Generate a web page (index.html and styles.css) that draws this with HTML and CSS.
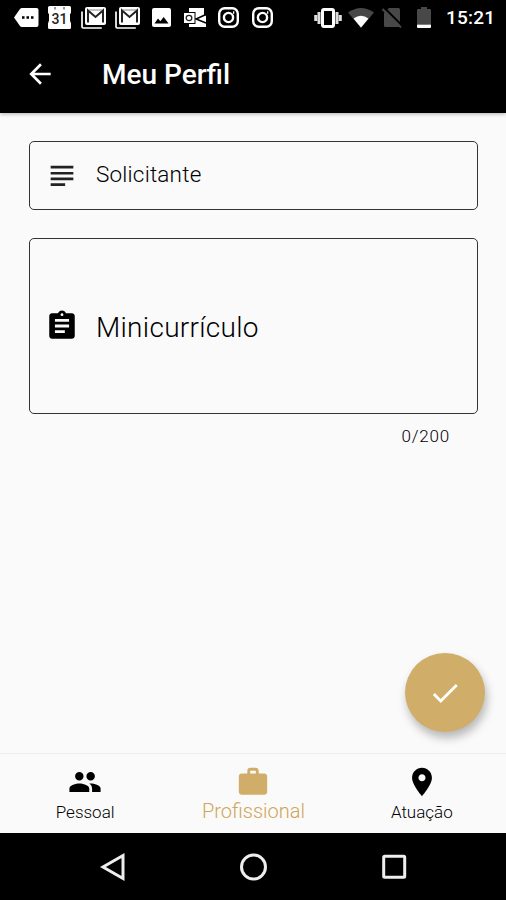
FILE: index.html
```
<!DOCTYPE html>
<html lang="pt-BR">
    <head>
        <title>Meu Perfil</title>
        <meta charset="UTF-8">
        <meta name="viewport" content="width=device-width, initial-scale=1">
        <link rel="stylesheet" href="styles.css">
    </head>
    <body>
        <div class="status-bar">
            <div class="notifications">
                <svg width="25" height="19" viewBox="0 0 25 19">
                    <path fill="#fff" d="M8 0h14.500q2 0 2 2v15q0 2-2 2H8q-1.200 0-2-1L0 9.500 6 1q.8-1 2-1z"/>
                    <path d="M8 8.300h2.500v2.400H8zM12.500 8.300H15v2.400h-2.500zM17 8.300h2.500v2.400H17z"/>
                </svg>
                <svg class="calendar" width="23" height="23" viewBox="0 0 23 23">
                    <path fill="#fff" d="M1.500 0h20Q23 0 23 1.500v5l-1 2v6l1 3v4q0 1.500-1.500 1.500h-20Q0 23 0 21.500v-4l1-3v-6l-1-2v-5Q0 0 1.500 0z"/>
                    <path fill="#999" d="M6 1h2v2.500H6zM15 1h2v2.500h-2z"/>
                    <text x="11.500" y="18" text-anchor="middle">31</text>
                </svg>
                <svg width="25" height="22" viewBox="0 0 25 22">
                    <path fill="none" stroke="#fff" stroke-width="1.700" d="M1 4.500v15.200q0 1.300 1.300 1.300h18.500"/>
                    <rect x="4" y="0" width="21" height="18" rx="2" fill="#fff"/>
                    <path fill="none" stroke="#222" stroke-width="2" d="M7 15.500V3.500l7.500 6.500L22 3.500v12"/>
                    <path fill="none" stroke="#888" stroke-width="1" d="M8 3h13"/>
                </svg>
                <svg width="25" height="22" viewBox="0 0 25 22">
                    <path fill="none" stroke="#fff" stroke-width="1.700" d="M1 4.500v15.200q0 1.300 1.300 1.300h18.500"/>
                    <rect x="4" y="0" width="21" height="18" rx="2" fill="#fff"/>
                    <path fill="none" stroke="#222" stroke-width="2" d="M7 15.500V3.500l7.500 6.500L22 3.500v12"/>
                    <path fill="none" stroke="#888" stroke-width="1" d="M8 3h13"/>
                </svg>
                <svg class="photo" width="19" height="19" viewBox="0 0 19 19">
                    <rect width="19" height="19" rx="2" fill="#fff"/>
                    <path d="M2.500 15.500l3.500-5 2.300 2.700 3.400-4.200 4.800 6.500z"/>
                </svg>
                <svg class="outlook" width="24" height="20" viewBox="0 0 24 20">
                    <path fill="#fff" d="M6 0h15v7.500h2V19H6z"/>
                    <path fill="none" stroke="#000" stroke-width="1.500" d="M23 6.500L13 11l10 4"/>
                    <rect x=".5" y="4.500" width="11.500" height="11" fill="#fff" stroke="#000" stroke-width="1"/>
                    <ellipse cx="6" cy="10" rx="2.800" ry="2.600" fill="none" stroke="#222" stroke-width="1.300"/>
                </svg>
                <svg class="insta" width="21" height="21" viewBox="0 0 21 21">
                    <rect x="1.200" y="1.200" width="18.600" height="18.600" rx="5.500"/>
                    <circle cx="10.500" cy="10.500" r="4.600"/>
                    <path d="M15 5.500h1.300"/>
                </svg>
                <svg class="insta" width="21" height="21" viewBox="0 0 21 21">
                    <rect x="1.200" y="1.200" width="18.600" height="18.600" rx="5.500"/>
                    <circle cx="10.500" cy="10.500" r="4.600"/>
                    <path d="M15 5.500h1.300"/>
                </svg>
            </div>
            <div class="system">
                <svg width="28" height="20" viewBox="0 0 28 20">
                    <rect x="8.500" y="1.500" width="11" height="17" rx="1.500" fill="none" stroke="#fff" stroke-width="3"/>
                    <path fill="none" stroke="#ddd" stroke-width="3" d="M5 4v12M1.700 7v6M23 4v12M26.300 7v6"/>
                </svg>
                <svg class="wifi" width="26" height="20" viewBox="0 0 26 20">
                    <path fill="#484848" d="M0 4.500Q13-4.500 26 4.500L13 20z"/>
                    <path fill="#fff" d="M5.500 10.500Q13 5 20.500 10.500L13 19.500z"/>
                </svg>
                <svg class="sim" width="20" height="20" viewBox="0 0 20 20">
                    <path fill="#484848" d="M7 0h9.500q1.500 0 1.500 1.500V19H3.500Q2 19 2 17.500V5z"/>
                    <path stroke="#000" stroke-width="2" d="M2-.5l19 19"/>
                    <path stroke="#484848" stroke-width="2" d="M.5 1l18.500 18.500"/>
                </svg>
                <svg class="battery" width="14" height="21" viewBox="0 0 14 21">
                    <path fill="#484848" d="M4 0h6v2h3q1 0 1 1v14H0V3q0-1 1-1h3z"/>
                    <path fill="#fff" d="M0 17.500h14V20q0 1-1 1H1q-1 0-1-1z"/>
                </svg>
                <span class="clock">15:21</span>
            </div>
        </div>

        <div class="app-bar">
            <svg class="back" width="34" height="34" viewBox="0 0 24 24">
                <path fill="#fff" d="M20 11H7.830l5.590-5.590L12 4l-8 8 8 8 1.410-1.410L7.830 13H20v-2z"/>
            </svg>
            <h1 class="title">Meu Perfil</h1>
        </div>

        <div class="content">
            <div class="field">
                <svg width="34" height="34" viewBox="0 0 24 24">
                    <path fill="#222" d="M4 4.800h16v1.900H4zM4 9.100h16V11H4zM4 13.100h16V15H4zM4 17.200h10.200v1.900H4z"/>
                </svg>
                <span class="label">Solicitante</span>
            </div>
            <div class="field field-big">
                <svg width="34" height="34" viewBox="0 0 24 24">
                    <path d="M19 3h-4.180C14.400 1.840 13.300 1 12 1c-1.300 0-2.400.84-2.820 2H5c-1.100 0-2 .9-2 2v14c0 1.100.9 2 2 2h14c1.100 0 2-.9 2-2V5c0-1.100-.9-2-2-2zm-7 0c.55 0 1 .45 1 1s-.45 1-1 1-1-.45-1-1 .45-1 1-1zm2 14H7v-2h7v2zm3-4H7v-2h10v2zm0-4H7V7h10v2z"/>
                </svg>
                <span class="label">Minicurrículo</span>
            </div>
            <div class="counter">0/200</div>
            <div class="fab">
                <svg width="34" height="34" viewBox="0 0 24 24">
                    <path fill="#fff" d="M9 16.170L4.830 12l-1.420 1.410L9 19 21 7l-1.410-1.410z"/>
                </svg>
            </div>
        </div>

        <div class="tabs">
            <div class="tab">
                <svg width="34" height="34" viewBox="0 0 24 24">
                    <path d="M16 11c1.660 0 2.990-1.340 2.990-3S17.660 5 16 5c-1.660 0-3 1.340-3 3s1.340 3 3 3zm-8 0c1.660 0 2.990-1.340 2.990-3S9.660 5 8 5C6.340 5 5 6.340 5 8s1.340 3 3 3zm0 2c-2.330 0-7 1.170-7 3.500V19h14v-2.500c0-2.330-4.670-3.500-7-3.500zm8 0c-.29 0-.62.020-.97.050 1.160.84 1.970 1.970 1.970 3.450V19h6v-2.500c0-2.330-4.670-3.500-7-3.500z"/>
                </svg>
                <span>Pessoal</span>
            </div>
            <div class="tab active">
                <svg width="34" height="34" viewBox="0 0 24 24">
                    <path d="M20 6h-4V4c0-1.110-.89-2-2-2h-4c-1.110 0-2 .89-2 2v2H4c-1.110 0-2 .89-2 2v11c0 1.110.89 2 2 2h16c1.110 0 2-.89 2-2V8c0-1.110-.89-2-2-2zm-6 0h-4V4h4v2z"/>
                </svg>
                <span>Profissional</span>
            </div>
            <div class="tab">
                <svg width="34" height="34" viewBox="0 0 24 24">
                    <path d="M12 2C8.130 2 5 5.130 5 9c0 5.250 7 13 7 13s7-7.750 7-13c0-3.870-3.130-7-7-7zm0 9.500c-1.380 0-2.500-1.120-2.500-2.500s1.120-2.500 2.500-2.500 2.500 1.120 2.500 2.500-1.120 2.500-2.500 2.500z"/>
                </svg>
                <span>Atuação</span>
            </div>
        </div>

        <div class="nav-bar">
            <svg width="28" height="30" viewBox="0 0 28 30"><path d="M25 3.500v23L5 15z"/></svg>
            <svg width="28" height="30" viewBox="0 0 28 30"><circle cx="14.500" cy="15" r="12"/></svg>
            <svg width="28" height="30" viewBox="0 0 28 30"><rect x="3.700" y="4.200" width="21" height="21" rx="1"/></svg>
        </div>
    </body>
</html>
```
FILE: styles.css
```
* {
    box-sizing: border-box;
}

body {
    margin: 0;
    height: 900px;
    display: flex;
    flex-direction: column;
    overflow: hidden;
    background: #fafafa;
    color: #000;
    font-family: Roboto, sans-serif;
}

svg {
    display: block;
    flex: none;
}

.status-bar {
    height: 35px;
    padding: 0 11px 0 14px;
    display: flex;
    justify-content: space-between;
    align-items: center;
    background: #000;
}

.notifications,
.system {
    display: flex;
    align-items: center;
}

.notifications {
    gap: 9px;
}

.calendar {
    margin-right: 1px;
}

.calendar text {
    font: 500 14px Roboto, sans-serif;
    fill: #222;
}

.photo {
    margin-left: 3px;
}

.outlook {
    margin-left: 3px;
}

.insta {
    margin-left: 2px;
    fill: none;
    stroke: #fff;
    stroke-width: 2.4;
}

.insta + .insta {
    margin-left: 4px;
}

.wifi {
    margin-left: 6px;
}

.sim {
    margin-left: 8px;
}

.battery {
    margin-left: 15px;
}

.clock {
    width: 49px;
    margin-left: 15px;
    padding-top: 1px;
    color: #fff;
    font-size: 19px;
    font-weight: 500;
    letter-spacing: 0.2px;
    line-height: 22px;
    white-space: nowrap;
}

.app-bar {
    height: 78px;
    padding: 0 23px;
    display: flex;
    align-items: center;
    gap: 45px;
    background: #000;
    color: #fff;
    box-shadow: 0 1px 4px rgba(0, 0, 0, 0.3);
    z-index: 1;
}

.back {
    padding: 1px;
}

.title {
    margin: 0;
    font-size: 28px;
    font-weight: 500;
}

.content {
    position: relative;
    flex: 1;
    padding: 28px 28px 0 29px;
}

.field {
    height: 69px;
    padding-left: 15px;
    display: flex;
    align-items: center;
    gap: 17px;
    border: 1px solid #333;
    border-radius: 5px;
    font-size: 22.5px;
    font-weight: 300;
    letter-spacing: 0.2px;
}

.field .label {
    padding-bottom: 3px;
}

.field-big {
    height: 176px;
    margin-top: 28px;
    font-size: 28px;
    letter-spacing: 0.3px;
}

.field-big .label {
    padding: 2px 0 0;
}

.counter {
    margin-top: 12px;
    padding-right: 28px;
    font-size: 17px;
    font-weight: 300;
    line-height: 20px;
    letter-spacing: 0.8px;
    text-align: right;
}

.fab {
    position: absolute;
    right: 21px;
    bottom: 21px;
    width: 80px;
    height: 79px;
    display: flex;
    align-items: center;
    justify-content: center;
    border-radius: 50%;
    background: #d0ad68;
    box-shadow: 2px 6px 10px rgba(0, 0, 0, 0.27);
}

.tabs {
    height: 80px;
    padding-left: 1px;
    display: flex;
    border-top: 1px solid #eee;
}

.tab {
    flex: 1;
    padding-top: 11px;
    display: flex;
    flex-direction: column;
    align-items: center;
    font-size: 17px;
    font-weight: 300;
    line-height: 27px;
}

.active {
    color: #d0a558;
    fill: #d0ad68;
    font-size: 20px;
    line-height: 24px;
}

.nav-bar {
    height: 67px;
    padding: 0 98px;
    display: flex;
    align-items: center;
    justify-content: space-between;
    background: #000;
    fill: none;
    stroke: #eee;
    stroke-width: 3;
}
```
